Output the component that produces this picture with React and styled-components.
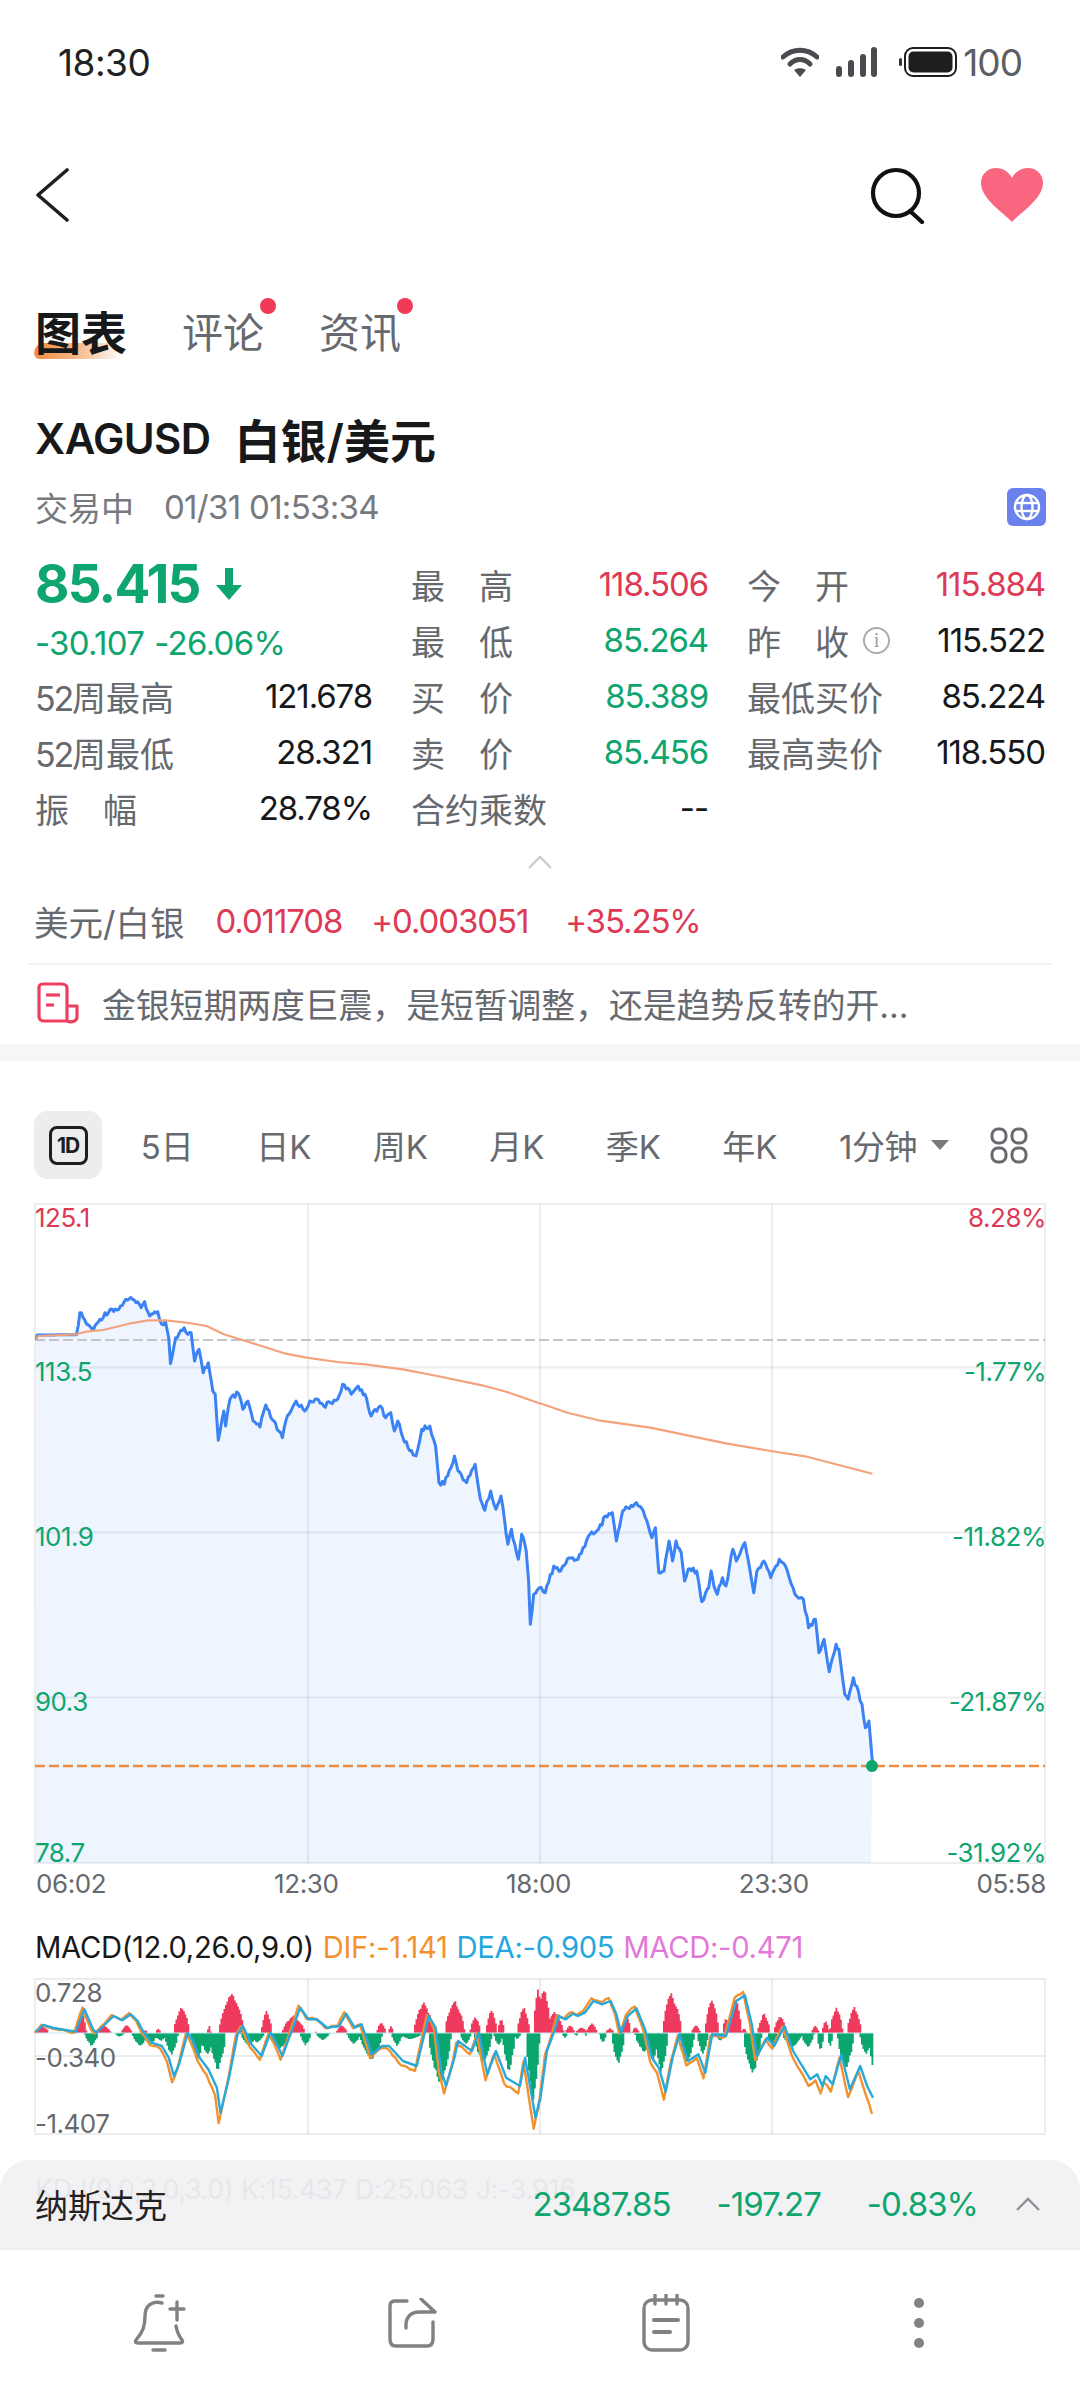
import React from 'react'
import styled, { createGlobalStyle } from 'styled-components'

const GREEN = '#0ea56f'
const RED = '#dd3a55'
const GRAY = '#66696e'
const INK = '#17181a'
const SANS = 'Inter, "Noto Sans CJK SC", sans-serif'

const GlobalStyle = createGlobalStyle`
  html, body { margin: 0; padding: 0; background: #fff; }
  body { font-family: ${SANS}; color: ${INK}; }
  * { box-sizing: border-box; }
`

// chart data was read off the screenshot in zoomed px, left half and right half
const SX = 2.904
const leftPrice = [[105,475],[108,462],[222,461],[232,395],[245,415],[252,430],[272,445],[290,415],[320,385],[345,385],[365,355],[385,355],[410,380],[420,362],[435,405],[458,392],[470,430],[480,420],[490,470],[495,548],[510,470],[535,440],[545,460],[555,455],[565,540],[578,505],[590,575],[605,545],[618,630],[625,640],[634,778],[650,690],[655,735],[668,655],[692,637],[705,685],[720,660],[735,720],[755,738],[772,672],[790,715],[820,770],[830,720],[860,660],[885,690],[900,660],[915,655],[940,675],[980,655],[995,610],[1020,640],[1040,615],[1060,640],[1078,705],[1105,675],[1120,710],[1135,695],[1145,750],[1155,720],[1170,770],[1200,822],[1208,825],[1225,745],[1248,735],[1265,795],[1275,905],[1290,910],[1320,825],[1330,870],[1355,905],[1380,850],[1395,955],[1408,988],[1425,930],[1440,985],[1455,945],[1475,1090],[1485,1045],[1505,1135],[1515,1060],[1528,1110],[1535,1200],[1540,1330],[1550,1240],[1566,1220]]
const rightPrice = [[15,1235],[40,1155],[60,1170],[85,1130],[110,1135],[125,1100],[145,1060],[170,1045],[190,1005],[210,995],[222,1080],[240,990],[280,965],[300,990],[325,1070],[335,1040],[345,1175],[360,1170],[375,1080],[385,1140],[395,1080],[410,1115],[420,1200],[430,1165],[455,1170],[462,1210],[470,1262],[490,1220],[497,1170],[505,1215],[515,1240],[530,1190],[540,1215],[560,1105],[570,1140],[595,1085],[610,1170],[621,1235],[630,1170],[650,1140],[670,1190],[695,1135],[715,1160],[725,1195],[745,1245],[765,1255],[780,1340],[800,1315],[810,1415],[825,1375],[840,1472],[860,1390],[868,1405],[885,1540],[895,1555],[910,1490],[935,1570],[945,1640],[955,1620],[965,1740],[965,1756]]
const leftAvg = [[105,475],[110,465],[222,460],[250,452],[300,447],[380,427],[430,418],[480,418],[550,426],[600,435],[650,460],[720,482],[830,518],[890,530],[980,543],[1060,550],[1170,565],[1270,585],[1400,613],[1470,632],[1566,667]]
const rightAvg = [[0,667],[80,695],[170,718],[320,740],[540,787],[670,810],[770,826],[965,878]]

const leftDea = [[105,392],[125,372],[160,382],[220,392],[245,325],[270,385],[280,395],[300,375],[330,345],[355,358],[380,340],[400,360],[415,390],[440,425],[470,435],[490,470],[505,525],[520,490],[545,395],[560,420],[580,470],[605,505],[630,560],[640,635],[665,530],[690,400],[705,375],[730,430],[760,465],[785,395],[800,420],[820,465],[845,395],[872,320],[895,355],[920,355],[950,380],[985,375],[1005,338],[1030,380],[1050,370],[1080,460],[1110,435],[1130,435],[1170,480],[1210,495],[1245,345],[1265,380],[1280,500],[1295,555],[1320,470],[1330,420],[1370,450],[1390,395],[1415,520],[1440,450],[1470,530],[1510,555],[1525,470],[1555,650],[1566,600]]
const rightDea = [[0,600],[20,450],[40,395],[55,345],[75,355],[95,338],[110,345],[130,335],[155,300],[180,310],[205,300],[222,340],[235,395],[255,345],[280,322],[305,385],[325,470],[345,500],[365,572],[385,470],[405,400],[430,480],[460,460],[480,515],[500,400],[540,405],[570,300],[595,283],[615,370],[630,465],[660,410],[680,435],[710,375],[735,450],[785,535],[805,520],[820,555],[830,525],[850,550],[875,460],[900,565],[930,495],[950,555],[967,590]]

const redLeft = [[120,15,22],[233,12,70],[300,15,22],[365,12,25],[420,5,10],[457,6,14],[525,18,80],[605,4,22],[670,28,125],[772,12,70],[850,25,55],[915,3,4],[990,12,25],[1105,10,35],[1133,6,22],[1228,22,95],[1318,22,100],[1378,12,52],[1425,12,75],[1453,8,45],[1518,14,82],[1560,10,140]]
const redRight = [[8,16,145],[40,20,65],[85,10,25],[118,12,18],[148,12,30],[200,10,15],[248,10,60],[275,8,18],[378,18,135],[395,10,85],[450,10,25],[497,15,110],[538,8,50],[565,14,110],[590,6,15],[648,14,60],[695,14,55],[797,8,25],[827,8,40],[858,14,85],[910,16,80]]
const greenLeft = [[263,15,40],[345,10,12],[405,18,40],[437,12,35],[465,15,25],[495,15,70],[570,14,90],[600,18,65],[630,18,115],[720,18,40],[745,15,30],[810,25,50],[885,12,38],[935,15,22],[1025,15,35],[1075,25,85],[1150,12,40],[1190,25,20],[1275,25,160],[1350,12,35],[1400,20,95],[1445,10,40],[1475,14,120],[1500,8,20],[1545,15,210]]
const greenRight = [[70,6,15],[103,4,10],[130,3,10],[180,8,30],[225,14,100],[300,20,60],[325,14,85],[350,14,125],[425,16,95],[470,12,65],[520,10,25],[615,20,130],[672,10,40],[730,22,45],[775,14,45],[812,8,55],[840,6,45],[885,18,115],[945,14,70],[962,8,100]]

const noise = (i) => {
  const v = Math.sin(i * 12.9898) * 43758.5453
  return v - Math.floor(v) - 0.5
}

const toPage = (left, right, baseY) => [
  ...left.map(([x, y]) => [x / SX, baseY + y / 3]),
  ...right.map(([x, y]) => [540 + x / SX, baseY + y / 3]),
]

// walks the anchors and adds a small deterministic shake, like tick data
const shake = (points, step, amp, from = 0, to = 9999) => {
  const out = []
  let n = 0
  points.slice(1).forEach(([x, y], idx) => {
    const [px, py] = points[idx]
    const count = Math.max(1, Math.round(Math.abs(x - px) / step))
    for (let k = 0; k < count; k++) {
      const t = k / count
      const ax = px + (x - px) * t
      const wobble = ax > from && ax < to && k > 0 ? noise(++n) * amp : 0
      out.push([ax, py + (y - py) * t + wobble])
    }
  })
  out.push(points[points.length - 1])
  return out
}

const line = (pts) => pts.map(([x, y]) => `${x.toFixed(1)},${y.toFixed(1)}`).join(' ')

const pricePts = shake(toPage(leftPrice, rightPrice, 1180), 1.7, 5, 78, 868)
const avgPts = toPage(leftAvg, rightAvg, 1180)
const areaPts = [[36, 1862], ...pricePts, [871, 1862]]

const deaPts = toPage(leftDea, rightDea, 1900)
const ZERO = 2032
const difPts = shake(
  [
    ...deaPts.slice(0, -1).map(([x, y]) => [x - 1.8, ZERO + (y - ZERO) * 1.12 + 1]),
    [872, 2113],
  ],
  3,
  2
)

const bars = (left, right, dir) => {
  const peaks = [
    ...left.map(([x, w, h]) => [x / SX, (w * 1.3) / SX, h / 3]),
    ...right.map(([x, w, h]) => [540 + x / SX, (w * 1.3) / SX, h / 3]),
  ]
  let d = ''
  for (let x = 36; x < 873; x += 1.5) {
    let h = 0
    peaks.forEach(([c, w, p]) => {
      const off = Math.abs(x - c) / w
      if (off < 1) h = Math.max(h, p * Math.pow(1 - off, 0.55))
    })
    if (h > 0.5) {
      h = h * (0.94 + noise(x) * 0.12)
      d += `M${x.toFixed(1)} ${ZERO}v${(dir * h).toFixed(1)}h1.8v${(-dir * h).toFixed(1)}z`
    }
  }
  return d
}
const redBars = bars(redLeft, redRight, -1)
const greenBars = bars(greenLeft, greenRight, 1)

const Page = styled.div`
  width: 1080px;
  height: 2400px;
  overflow: hidden;
  background: #fff;
`

const StatusBar = styled.div`
  height: 124px;
  padding: 0 58px 0 58px;
  display: flex;
  align-items: center;
  justify-content: space-between;
`
const Clock = styled.div`
  font-size: 37px;
  letter-spacing: -0.5px;
  color: #222;
`
const StatusIcons = styled.div`
  display: flex;
  align-items: center;
  gap: 6px;
  font-size: 37px;
  letter-spacing: -1px;
  color: #5c5e62;
`

const NavBar = styled.div`
  height: 142px;
  padding: 0 36px 0 34px;
  display: flex;
  align-items: center;
  justify-content: space-between;
`
const NavRight = styled.div`
  display: flex;
  align-items: center;
  gap: 54px;
`

const TabRow = styled.div`
  height: 134px;
  padding-left: 35px;
  display: flex;
  align-items: center;
  gap: 55px;
`
const Tab = styled.div`
  position: relative;
  font-size: ${(p) => (p.$active ? 46 : 41)}px;
  font-weight: ${(p) => (p.$active ? 700 : 400)};
  color: ${(p) => (p.$active ? INK : GRAY)};
  line-height: 56px;
  &::before {
    content: ${(p) => (p.$active ? '""' : 'none')};
    position: absolute;
    left: -1px;
    top: 38px;
    width: 88px;
    height: 16px;
    border-radius: 10px 2px 2px 6px;
    background: linear-gradient(100deg, #f08a3c 0%, #f6b98a 50%, rgba(250, 220, 195, 0) 100%);
  }
  &::after {
    content: ${(p) => (p.$dot ? '""' : 'none')};
    position: absolute;
    right: -12px;
    top: -7px;
    width: 16px;
    height: 16px;
    border-radius: 50%;
    background: #f03a57;
  }
`
const TabText = styled.span`
  position: relative;
  z-index: 1;
`

const TitleRow = styled.div`
  height: 76px;
  padding-left: 35px;
  display: flex;
  align-items: center;
  gap: 24px;
  font-size: 46px;
  font-weight: 600;
  color: ${INK};
`
const Symbol = styled.span`
  font-size: 42px;
  letter-spacing: -0.6px;
`

const TradeRow = styled.div`
  height: 62px;
  padding: 0 34px 0 35px;
  display: flex;
  align-items: center;
  gap: 30px;
  font-size: 33px;
  color: #77797e;
`
const TradeTime = styled.span`
  flex: 1;
  letter-spacing: -0.7px;
`
const GlobeBadge = styled.div`
  width: 39px;
  height: 38px;
  border-radius: 6px;
  background: #6b82ee;
  display: flex;
  align-items: center;
  justify-content: center;
`

const QuoteGrid = styled.div`
  margin-top: 18px;
  margin-bottom: 1px;
  padding-left: 35px;
  display: grid;
  grid-template-columns: 337px 297px 298px;
  grid-auto-rows: 56px;
  column-gap: 39px;
`
const PriceCell = styled.div`
  display: flex;
  align-items: center;
  gap: 14px;
  color: ${GREEN};
  font-size: 53px;
  font-weight: 700;
  letter-spacing: -1.8px;
`
const ChangeCell = styled.div`
  display: flex;
  align-items: center;
  gap: 10px;
  padding-top: 6px;
  color: ${GREEN};
  font-size: 33px;
  letter-spacing: -0.7px;
`
const Quote = styled.div`
  display: flex;
  align-items: center;
  justify-content: space-between;
`
const QuoteLabel = styled.span`
  display: flex;
  align-items: center;
  gap: 14px;
  font-size: 34px;
  color: ${GRAY};
`
const SpreadLabel = styled.span`
  display: flex;
  gap: 34px;
`
const WeekLabel = styled.span`
  display: inline-block;
`
const WeekDigits = styled.span`
  letter-spacing: -2.2px;
`
const QuoteValue = styled.span`
  font-size: 33px;
  letter-spacing: -1.1px;
  color: ${(p) => p.$color || INK};
`
const InfoDot = styled.span`
  width: 27px;
  height: 27px;
  border: 2px solid #a9abaf;
  border-radius: 50%;
  display: flex;
  align-items: center;
  justify-content: center;
  font-family: "Liberation Serif", serif;
  font-size: 20px;
  color: #9b9da1;
`

const Collapse = styled.div`
  height: 50px;
  display: flex;
  align-items: center;
  justify-content: center;
`

const PairRow = styled.div`
  height: 68px;
  padding-left: 34px;
  display: flex;
  align-items: center;
  font-size: 34.5px;
  color: ${GRAY};
`
const PairValue = styled.span`
  margin-left: ${(p) => p.$gap}px;
  font-size: 33px;
  color: ${RED};
  letter-spacing: -1.1px;
`

const NewsRow = styled.div`
  margin: 8px 28px 0;
  height: 81px;
  border-top: 2px solid #f1f2f3;
  padding: 0 0 3px 9px;
  display: flex;
  align-items: center;
  gap: 23px;
  font-size: 33.8px;
  color: ${GRAY};
`

const Band = styled.div`
  height: 17px;
  background: #f5f6f7;
`

const PeriodRow = styled.div`
  margin-top: 50px;
  height: 68px;
  padding-left: 34px;
  display: flex;
  align-items: center;
  font-size: 33px;
  color: ${GRAY};
`
const DayButton = styled.div`
  width: 68px;
  height: 68px;
  margin-right: 7px;
  border-radius: 14px;
  background: #eceded;
  display: flex;
  align-items: center;
  justify-content: center;
`
const DayGlyph = styled.span`
  width: 39px;
  height: 39px;
  border: 3px solid #1d1e20;
  border-radius: 8px;
  display: flex;
  align-items: center;
  justify-content: center;
  font-size: 21px;
  font-weight: 700;
  letter-spacing: -1px;
  color: #1d1e20;
`
const Period = styled.div`
  width: 116.5px;
  text-align: center;
`
const MinutePicker = styled.div`
  margin-left: 31px;
  display: flex;
  align-items: center;
  gap: 14px;
  letter-spacing: -0.4px;
`
const Caret = styled.span`
  width: 0;
  height: 0;
  border-left: 9px solid transparent;
  border-right: 9px solid transparent;
  border-top: 10px solid #77797e;
`
const GridButton = styled.div`
  margin-left: 41px;
  display: flex;
`

const Chart = styled.div`
  position: relative;
  margin: 24px 0 0 34px;
  width: 1012px;
  height: ${(p) => p.$h}px;
  overflow: hidden;
`
const Plot = styled.svg`
  display: block;
`
const AxisLabel = styled.span`
  position: absolute;
  top: ${(p) => p.$top}px;
  ${(p) => (p.$right ? 'right: 0;' : 'left: 1px;')}
  font-size: 26px;
  line-height: 30px;
  letter-spacing: -0.5px;
  color: ${(p) => p.$color};
`

const TimeAxis = styled.div`
  height: 42px;
  padding: 0 34px 4px 36px;
  display: flex;
  align-items: center;
  justify-content: space-between;
  font-size: 26px;
  letter-spacing: -0.4px;
  color: ${GRAY};
`

const Legend = styled.div`
  height: 72px;
  padding: 11px 0 0 35px;
  display: flex;
  align-items: center;
  gap: 9px;
  font-size: 29.2px;
  letter-spacing: -0.3px;
`
const LegendItem = styled.span`
  color: ${(p) => p.$color};
`

const MacdChart = styled(Chart)`
  margin-top: 0;
`

const TickerBar = styled.div`
  position: relative;
  margin-top: 25px;
  height: 88px;
  padding: 0 40px 0 35px;
  border-radius: 30px 30px 0 0;
  background: #f2f2f4;
  overflow: hidden;
  display: flex;
  align-items: center;
  font-size: 33px;
`
const TickerGhost = styled.div`
  position: absolute;
  left: 35px;
  top: 13px;
  display: flex;
  gap: 8px;
  font-size: 27px;
  color: #2d2f33;
  opacity: 0.05;
  letter-spacing: -0.5px;
`
const TickerName = styled.span`
  position: relative;
  flex: 1;
  color: #222;
`
const TickerValue = styled.span`
  position: relative;
  margin-left: ${(p) => p.$gap}px;
  color: ${GREEN};
  font-size: 33px;
  letter-spacing: -1px;
`
const TickerToggle = styled.span`
  position: relative;
  margin-left: 38px;
  display: flex;
`

const BottomBar = styled.div`
  height: 153px;
  padding: 0 0 6px 33px;
  border-top: 2px solid #ededee;
  display: grid;
  grid-template-columns: repeat(4, 253px);
  align-items: center;
  justify-items: center;
`

const Wifi = () => (
  <svg width="38" height="30" viewBox="0 0 38 30">
    <path d="M2 10C12 1 26 1 36 10" fill="none" stroke="#4a4b4e" strokeWidth="5" strokeLinecap="round" />
    <path d="M9 17C15 11 23 11 29 17" fill="none" stroke="#4a4b4e" strokeWidth="5" strokeLinecap="round" />
    <path d="M13 23C17 20.5 21 20.5 25 23L19 30Z" fill="#4a4b4e" />
  </svg>
)

const Signal = () => (
  <svg width="44" height="32" viewBox="0 0 44 32" style={{ marginLeft: 10 }}>
    <rect x="1" y="20" width="6" height="11" rx="3" fill="#4a4b4e" />
    <rect x="13" y="14" width="6" height="17" rx="3" fill="#4a4b4e" />
    <rect x="25" y="8" width="6" height="23" rx="3" fill="#4a4b4e" />
    <rect x="36" y="1" width="6" height="30" rx="3" fill="#4a4b4e" />
  </svg>
)

const Battery = () => (
  <svg width="58" height="30" viewBox="0 0 58 30" style={{ marginLeft: 14 }}>
    <rect x="0" y="11" width="3" height="8" rx="1.5" fill="#333" />
    <rect x="6" y="1" width="51" height="28" rx="8" fill="none" stroke="#1e1e1f" strokeWidth="2" />
    <rect x="9.5" y="4.5" width="44" height="21" rx="5" fill="#1e1e1f" />
  </svg>
)

const BackIcon = () => (
  <svg width="36" height="54" viewBox="0 0 36 54">
    <polyline points="33,2 4,27 33,52" fill="none" stroke="#1f2022" strokeWidth="3.6" strokeLinecap="round" strokeLinejoin="round" />
  </svg>
)

const SearchIcon = () => (
  <svg width="56" height="58" viewBox="0 0 56 58">
    <circle cx="26" cy="27" r="23" fill="none" stroke="#111" strokeWidth="4.2" />
    <line x1="40" y1="45" x2="52" y2="56" stroke="#111" strokeWidth="4.2" strokeLinecap="round" />
  </svg>
)

const HeartIcon = () => (
  <svg width="64" height="54" viewBox="0 0 64 54">
    <path
      d="M32 54C24 45 1 31 1 15C1 6 8 0 16 0C23 0 29 4 32 10C35 4 41 0 48 0C56 0 63 6 63 15C63 31 40 45 32 54Z"
      fill="#f9667f"
    />
  </svg>
)

const DownArrow = () => (
  <svg width="30" height="34" viewBox="0 0 28 34">
    <path d="M10 1H18V18H27L14 33L1 18H10Z" fill={GREEN} />
  </svg>
)

const Globe = () => (
  <svg width="30" height="30" viewBox="0 0 30 30" fill="none" stroke="#fff" strokeWidth="2.4">
    <circle cx="15" cy="15" r="12" />
    <ellipse cx="15" cy="15" rx="5.5" ry="12" />
    <line x1="3" y1="11" x2="27" y2="11" />
    <line x1="3" y1="19" x2="27" y2="19" />
  </svg>
)

const FoldChevron = ({ color = '#c9cacc', w = 24, h = 14 }) => (
  <svg width={w} height={h} viewBox="0 0 24 14">
    <polyline points="1,13 12,2 23,13" fill="none" stroke={color} strokeWidth="2.4" />
  </svg>
)

const NewsIcon = () => (
  <svg width="42" height="42" viewBox="0 0 42 42" fill="none" stroke="#ee3f60" strokeWidth="3.2" strokeLinejoin="round">
    <path d="M30 39H7C4 39 2 37 2 35V5C2 3 4 2 6 2H25C28 2 30 4 30 6V39C35 41 40 39 40 35V24H30" />
    <line x1="9" y1="13" x2="23" y2="13" />
    <line x1="9" y1="23" x2="17" y2="23" />
  </svg>
)

const GridIcon = () => (
  <svg width="38" height="37" viewBox="0 0 38 37" fill="none" stroke="#66696e" strokeWidth="3">
    <rect x="2" y="2" width="14" height="14" rx="6" />
    <rect x="22" y="2" width="14" height="14" rx="6" />
    <rect x="2" y="21" width="14" height="14" rx="6" />
    <rect x="22" y="21" width="14" height="14" rx="6" />
  </svg>
)

const BellIcon = () => (
  <svg width="56" height="58" viewBox="0 0 56 58" fill="none" stroke="#808182" strokeWidth="3.4" strokeLinecap="round">
    <path d="M30 9C20 6 13 12 13 22C13 32 11 38 4 46C3 48 3 49 6 49H48C51 49 51 47 50 46C47 42 45 38 44 32" />
    <line x1="24" y1="2" x2="31" y2="2" />
    <line x1="21" y1="56" x2="33" y2="56" />
    <line x1="38" y1="15" x2="52" y2="15" />
    <line x1="45" y1="8" x2="45" y2="26" />
  </svg>
)

const ShareIcon = () => (
  <svg width="52" height="50" viewBox="0 0 52 50" fill="none" stroke="#808182" strokeWidth="3.4" strokeLinecap="round" strokeLinejoin="round">
    <path d="M20 3H8C4 3 3 5 3 8V41C3 46 5 48 9 48H40C44 48 46 46 46 41V24" />
    <path d="M34 1L48 14H32C24 14 19 19 19 27V30" />
  </svg>
)

const NoteIcon = () => (
  <svg width="48" height="58" viewBox="0 0 48 58" fill="none" stroke="#808182" strokeWidth="3.4" strokeLinecap="round">
    <rect x="2" y="6" width="44" height="50" rx="8" />
    <line x1="13" y1="1" x2="13" y2="10" />
    <line x1="24" y1="1" x2="24" y2="10" />
    <line x1="35" y1="1" x2="35" y2="10" />
    <line x1="12" y1="26" x2="36" y2="26" strokeWidth="4" />
    <line x1="12" y1="38" x2="28" y2="38" strokeWidth="4" />
  </svg>
)

const MoreIcon = () => (
  <svg width="12" height="52" viewBox="0 0 12 52" fill="#808182">
    <circle cx="6" cy="6" r="5" />
    <circle cx="6" cy="26" r="5" />
    <circle cx="6" cy="46" r="5" />
  </svg>
)

const GRID = 'rgba(70, 80, 100, 0.1)'

const PriceChart = () => (
  <Plot width="1012" height="661" viewBox="34 1202 1012 661">
    <polygon points={line(areaPts)} fill="#eef5ff" />
    <rect x="35" y="1203" width="1010" height="659" fill="none" stroke={GRID} strokeWidth="2" />
    {[1366.5, 1531.5, 1696.5].map((y) => (
      <line key={y} x1="35" x2="1045" y1={y} y2={y} stroke={GRID} strokeWidth="2" />
    ))}
    {[308, 540, 772].map((x) => (
      <line key={x} x1={x} x2={x} y1="1203" y2="1862" stroke={GRID} strokeWidth="2" />
    ))}
    <line x1="35" x2="1045" y1="1339" y2="1339" stroke="#c4c5c8" strokeWidth="2" strokeDasharray="10 4" />
    <line x1="35" x2="1045" y1="1765" y2="1765" stroke="#ee8a42" strokeWidth="2.4" strokeDasharray="10 4" />
    <polyline points={line(pricePts)} fill="none" stroke="#3b82f4" strokeWidth="3" strokeLinejoin="round" />
    <polyline points={line(avgPts)} fill="none" stroke="#f4a27c" strokeWidth="2.2" strokeLinejoin="round" />
    <circle cx="872" cy="1765" r="6" fill="#0aa66e" />
  </Plot>
)

const MacdPlot = () => (
  <Plot width="1012" height="157" viewBox="34 1977 1012 157">
    <rect x="35" y="1978" width="1010" height="155" fill="none" stroke={GRID} strokeWidth="2" />
    <line x1="35" x2="1045" y1="2055" y2="2055" stroke={GRID} strokeWidth="2" />
    {[308, 540, 772].map((x) => (
      <line key={x} x1={x} x2={x} y1="1978" y2="2133" stroke={GRID} strokeWidth="2" />
    ))}
    <path d={redBars} fill="#ef3a5d" />
    <path d={greenBars} fill="#0aa66e" />
    <line x1="36" x2="873" y1={ZERO} y2={ZERO} stroke="#bfeaf0" strokeWidth="1" />
    <polyline points={line(difPts)} fill="none" stroke="#f2922e" strokeWidth="2.4" strokeLinejoin="round" />
    <polyline points={line(deaPts)} fill="none" stroke="#2aa8dc" strokeWidth="2.4" strokeLinejoin="round" />
  </Plot>
)

const priceLabels = [
  { top: 0, left: '125.1', right: '8.28%', color: RED },
  { top: 154, left: '113.5', right: '-1.77%', color: GREEN },
  { top: 319, left: '101.9', right: '-11.82%', color: GREEN },
  { top: 484, left: '90.3', right: '-21.87%', color: GREEN },
  { top: 635, left: '78.7', right: '-31.92%', color: GREEN },
]

const macdLabels = [
  { top: 0, text: '0.728' },
  { top: 65, text: '-0.340' },
  { top: 131, text: '-1.407' },
]

const quoteRows = [
  [
    { label: '最高', spread: true, value: '118.506', color: RED },
    { label: '今开', spread: true, value: '115.884', color: RED },
  ],
  [
    { label: '最低', spread: true, value: '85.264', color: GREEN },
    { label: '昨收', spread: true, info: true, value: '115.522' },
  ],
  [
    { label: '周最高', week: true, value: '121.678' },
    { label: '买价', spread: true, value: '85.389', color: GREEN },
    { label: '最低买价', value: '85.224' },
  ],
  [
    { label: '周最低', week: true, value: '28.321' },
    { label: '卖价', spread: true, value: '85.456', color: GREEN },
    { label: '最高卖价', value: '118.550' },
  ],
  [
    { label: '振幅', spread: true, value: '28.78%' },
    { label: '合约乘数', value: '--' },
  ],
]

const LabelText = ({ item }) => {
  if (item.spread) {
    return (
      <SpreadLabel>
        <span>{item.label[0]}</span>
        <span>{item.label[1]}</span>
      </SpreadLabel>
    )
  }
  if (item.week) {
    return (
      <WeekLabel>
        <WeekDigits>52</WeekDigits>
        {item.label}
      </WeekLabel>
    )
  }
  return item.label
}

const QuoteCell = ({ item }) => (
  <Quote>
    <QuoteLabel>
      <LabelText item={item} />
      {item.info && <InfoDot>i</InfoDot>}
    </QuoteLabel>
    <QuoteValue $color={item.color}>{item.value}</QuoteValue>
  </Quote>
)

const periods = ['5日', '日K', '周K', '月K', '季K', '年K']

export default function App() {
  return (
    <Page>
      <GlobalStyle />
      <StatusBar>
        <Clock>18:30</Clock>
        <StatusIcons>
          <Wifi />
          <Signal />
          <Battery />
          100
        </StatusIcons>
      </StatusBar>

      <NavBar>
        <BackIcon />
        <NavRight>
          <SearchIcon />
          <HeartIcon />
        </NavRight>
      </NavBar>

      <TabRow>
        <Tab $active><TabText>图表</TabText></Tab>
        <Tab $dot>评论</Tab>
        <Tab $dot>资讯</Tab>
      </TabRow>

      <TitleRow>
        <Symbol>XAGUSD</Symbol>
        <span>白银/美元</span>
      </TitleRow>

      <TradeRow>
        <span>交易中</span>
        <TradeTime>01/31 01:53:34</TradeTime>
        <GlobeBadge><Globe /></GlobeBadge>
      </TradeRow>

      <QuoteGrid>
        <PriceCell>85.415 <DownArrow /></PriceCell>
        {quoteRows[0].map((q) => <QuoteCell key={q.label} item={q} />)}
        <ChangeCell><span>-30.107</span><span>-26.06%</span></ChangeCell>
        {quoteRows[1].map((q) => <QuoteCell key={q.label} item={q} />)}
        {quoteRows[2].map((q) => <QuoteCell key={q.label} item={q} />)}
        {quoteRows[3].map((q) => <QuoteCell key={q.label} item={q} />)}
        {quoteRows[4].map((q) => <QuoteCell key={q.label} item={q} />)}
      </QuoteGrid>

      <Collapse><FoldChevron /></Collapse>

      <PairRow>
        美元/白银
        <PairValue $gap={31}>0.011708</PairValue>
        <PairValue $gap={29}>+0.003051</PairValue>
        <PairValue $gap={37}>+35.25%</PairValue>
      </PairRow>

      <NewsRow>
        <NewsIcon />
        金银短期两度巨震，是短暂调整，还是趋势反转的开...
      </NewsRow>
      <Band />

      <PeriodRow>
        <DayButton><DayGlyph>1D</DayGlyph></DayButton>
        {periods.map((p) => <Period key={p}>{p}</Period>)}
        <MinutePicker>1分钟<Caret /></MinutePicker>
        <GridButton><GridIcon /></GridButton>
      </PeriodRow>

      <Chart $h={661}>
        <PriceChart />
        {priceLabels.map((l) => (
          <React.Fragment key={l.top}>
            <AxisLabel $top={l.top} $color={l.color}>{l.left}</AxisLabel>
            <AxisLabel $top={l.top} $color={l.color} $right>{l.right}</AxisLabel>
          </React.Fragment>
        ))}
      </Chart>

      <TimeAxis>
        <span>06:02</span>
        <span>12:30</span>
        <span>18:00</span>
        <span>23:30</span>
        <span>05:58</span>
      </TimeAxis>

      <Legend>
        <LegendItem $color={INK}>MACD(12.0,26.0,9.0)</LegendItem>
        <LegendItem $color="#f2922e">DIF:-1.141</LegendItem>
        <LegendItem $color="#25a7dc">DEA:-0.905</LegendItem>
        <LegendItem $color="#e279d6">MACD:-0.471</LegendItem>
      </Legend>

      <MacdChart $h={157}>
        <MacdPlot />
        {macdLabels.map((l) => (
          <AxisLabel key={l.top} $top={l.top} $color={GRAY}>{l.text}</AxisLabel>
        ))}
      </MacdChart>

      <TickerBar>
        <TickerGhost>
          <span>KDJ(9.0,3.0,3.0)</span>
          <span>K:15.437</span>
          <span>D:25.063</span>
          <span>J:-3.916</span>
        </TickerGhost>
        <TickerName>纳斯达克</TickerName>
        <TickerValue $gap={0}>23487.85</TickerValue>
        <TickerValue $gap={46}>-197.27</TickerValue>
        <TickerValue $gap={46}>-0.83%</TickerValue>
        <TickerToggle><FoldChevron color="#8f9093" /></TickerToggle>
      </TickerBar>

      <BottomBar>
        <BellIcon />
        <ShareIcon />
        <NoteIcon />
        <MoreIcon />
      </BottomBar>
    </Page>
  )
}
